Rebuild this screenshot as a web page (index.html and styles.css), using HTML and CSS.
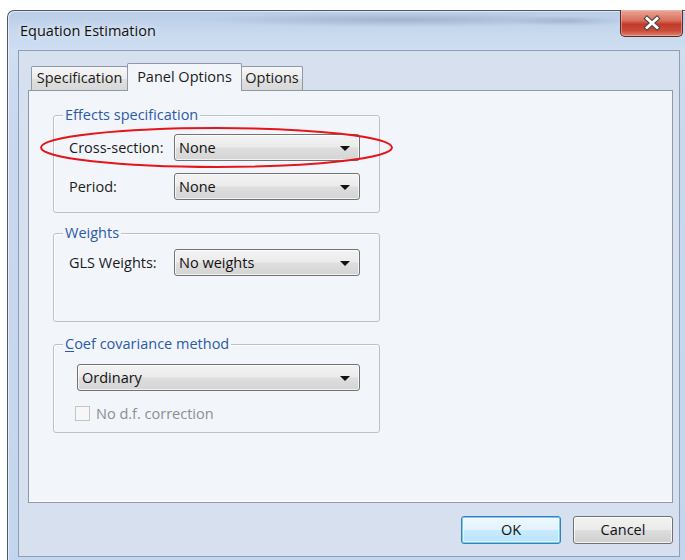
FILE: index.html
```html
<!DOCTYPE html>
<html lang="en">
<head>
<meta charset="utf-8">
<title>Equation Estimation</title>
<link rel="stylesheet" href="styles.css">
</head>
<body>
<div class="window">
  <div class="titlebar">
    <span class="title">Equation Estimation</span>
    <div class="close" title="Close">
      <svg width="22" height="16" viewBox="0 0 22 16">
        <path d="M6 3.5 L16 12.5 M16 3.5 L6 12.5" stroke="#4f4545" stroke-width="5" stroke-linecap="square"/>
        <path d="M6 3.5 L16 12.5 M16 3.5 L6 12.5" stroke="#ffffff" stroke-width="2.8" stroke-linecap="square"/>
      </svg>
    </div>
  </div>
  <div class="client">
    <div class="tabs">
      <div class="tab tab-spec">Specification</div>
      <div class="tab tab-panel active">Panel Options</div>
      <div class="tab tab-opts">Options</div>
    </div>
    <div class="panel">
      <div class="group group-effects">
        <span class="legend">Effects specification</span>
        <div class="row">
          <span class="label">Cross-section:</span>
          <div class="combo">None<span class="arrow"></span></div>
        </div>
        <div class="row">
          <span class="label">Period:</span>
          <div class="combo">None<span class="arrow"></span></div>
        </div>
      </div>
      <div class="group group-weights">
        <span class="legend">Weights</span>
        <div class="row">
          <span class="label">GLS Weights:</span>
          <div class="combo">No weights<span class="arrow"></span></div>
        </div>
      </div>
      <div class="group group-coef">
        <span class="legend"><u>C</u>oef covariance method</span>
        <div class="combo combo-wide">Ordinary<span class="arrow"></span></div>
        <div class="check disabled">
          <span class="box"></span>
          <span>No d.f. correction</span>
        </div>
      </div>
    </div>
    <div class="buttons">
      <div class="btn btn-default">OK</div>
      <div class="btn">Cancel</div>
    </div>
  </div>
</div>
<svg class="mark" width="355" height="43" viewBox="0 0 355 43">
  <ellipse cx="177.5" cy="21.5" rx="175.5" ry="19.5" fill="none" stroke="#e4161b" stroke-width="2"/>
</svg>
</body>
</html>
```

FILE: styles.css
```css
html, body {
  margin: 0;
  padding: 0;
}

body {
  width: 685px;
  height: 560px;
  overflow: hidden;
  background: #ffffff;
  font-family: "Segoe UI", "Open Sans", sans-serif;
  font-size: 14.5px;
  color: #1b1b1b;
  position: relative;
}

/* Aero window frame */
.window {
  margin: 10px 0 0 7px;
  width: 680px;
  height: 560px;
  border-top: 1px solid #4c5868;
  border-left: 1px solid #4c5868;
  border-top-left-radius: 7px;
  background:
    radial-gradient(ellipse 200px 7px at 390px 9px, rgba(110, 125, 150, 0.35), rgba(110, 125, 150, 0) 100%),
    radial-gradient(ellipse 60px 5px at 560px 10px, rgba(110, 125, 150, 0.3), rgba(110, 125, 150, 0) 100%),
    linear-gradient(180deg, #b8cce6 0px, #c7d8ee 20px, #cfdef1 39px, #c8d9ee 120px, #c4d6ed 100%);
  box-shadow: inset 1px 1px 0 rgba(255, 255, 255, 0.55);
}

.titlebar {
  height: 39px;
  display: flex;
  align-items: center;
}

.title {
  padding-left: 12px;
  font-size: 14.5px;
  color: #111;
  text-shadow: 0 0 6px rgba(255, 255, 255, 0.9);
}

.close {
  align-self: flex-start;
  margin: -1px 5px 0 auto;
  width: 61px;
  height: 26px;
  border: 1px solid #5a2a24;
  border-top: none;
  border-radius: 0 0 5px 5px;
  background: linear-gradient(180deg, #e9a898 0%, #d9705e 40%, #c2392a 55%, #c94c3b 80%, #dc8572 100%);
  box-shadow: inset 0 0 0 1px rgba(255, 200, 190, 0.45);
  display: flex;
  align-items: center;
  justify-content: center;
}

/* Dialog client area */
.client {
  margin-left: 10px;
  width: 660px;
  height: 505px;
  border: 1px solid #8d9eb6;
  background: #d6e0ee;
}

.tabs {
  height: 39px;
  padding-left: 12px;
  display: flex;
  align-items: flex-end;
}

.tab {
  box-sizing: border-box;
  height: 24px;
  border: 1px solid #8e98a8;
  border-bottom: none;
  background: linear-gradient(180deg, #f6f6f6 0%, #ececec 50%, #e0e0e0 51%, #d8d8d8 100%);
  text-align: center;
  line-height: 22px;
  font-size: 14.5px;
  border-radius: 2px 2px 0 0;
}

.tab-spec { width: 97px; }
.tab-opts { width: 62px; margin-left: -1px; }

.tab.active {
  position: relative;
  z-index: 1;
  width: 115px;
  height: 28px;
  margin: 0 0 -1px -1px;
  background: #f2f6fb;
  line-height: 26px;
}

.panel {
  box-sizing: border-box;
  margin-left: 9px;
  width: 645px;
  height: 413px;
  border: 1px solid #8e99a8;
  background: #f2f6fb;
  padding: 24px 0 0 24px;
  box-shadow: inset 0 -1px 0 #ffffff;
}

/* Group boxes */
.group {
  position: relative;
  box-sizing: border-box;
  width: 327px;
  border: 1px solid #b9c3d0;
  border-radius: 3px;
  box-shadow: inset 1px 1px 0 #ffffff;
}

.legend {
  position: absolute;
  top: -10px;
  left: 9px;
  padding: 0 2px;
  line-height: 18px;
  background: #f2f6fb;
  color: #2c5aa6;
  font-size: 14.5px;
}

.legend u {
  text-decoration-thickness: 1px;
  text-underline-offset: 2px;
}

.group-effects {
  height: 98px;
  padding: 18px 0 0 15px;
  margin-bottom: 20px;
  display: flex;
  flex-direction: column;
  gap: 12px;
}

.group-weights {
  height: 89px;
  padding: 15px 0 0 15px;
  margin-bottom: 22px;
}

.group-coef {
  height: 89px;
  padding: 19px 0 0 24px;
}

.row {
  display: flex;
  align-items: center;
}

.label {
  width: 105px;
  flex: none;
}

/* Drop-down lists */
.combo {
  position: relative;
  box-sizing: border-box;
  width: 186px;
  height: 27px;
  padding-left: 4px;
  line-height: 25px;
  border: 1px solid #727272;
  border-radius: 3px;
  background: linear-gradient(180deg, #f3f3f3 0%, #ebebeb 48%, #dedede 52%, #d4d4d4 100%);
  box-shadow: inset 0 0 0 1px rgba(255, 255, 255, 0.7);
  color: #111;
}

.combo-wide {
  width: 283px;
  margin-left: -1px;
}

.arrow {
  position: absolute;
  right: 9px;
  top: 11px;
  width: 0;
  height: 0;
  border-left: 5px solid transparent;
  border-right: 5px solid transparent;
  border-top: 5px solid #111;
}

.check {
  display: flex;
  align-items: center;
  gap: 6px;
  margin: 13px 0 0 -3px;
}

.check .box {
  box-sizing: border-box;
  width: 15px;
  height: 15px;
  border: 1px solid #c4c4c4;
  background: #f7f7f7;
}

.check.disabled {
  color: #8e8e8e;
}

/* Dialog buttons */
.buttons {
  display: flex;
  justify-content: flex-end;
  gap: 12px;
  margin: 13px 6px 0 0;
}

.btn {
  box-sizing: border-box;
  width: 100px;
  height: 28px;
  border: 1px solid #707070;
  border-radius: 3px;
  background: linear-gradient(180deg, #f2f2f2 0%, #ebebeb 48%, #dddddd 52%, #cfcfcf 100%);
  box-shadow: inset 0 0 0 1px rgba(255, 255, 255, 0.75);
  text-align: center;
  line-height: 26px;
  color: #111;
}

.btn-default {
  border-color: #3c7fb1;
  background: linear-gradient(180deg, #f0f9fe 0%, #e2f3fd 48%, #c9eafc 52%, #b9e3fb 100%);
  box-shadow: inset 0 0 0 1px #6fd0f4, inset 0 0 0 2px rgba(255, 255, 255, 0.5);
}

/* Highlight drawn around the cross-section row */
.mark {
  position: absolute;
  left: 39px;
  top: 126px;
}
```
